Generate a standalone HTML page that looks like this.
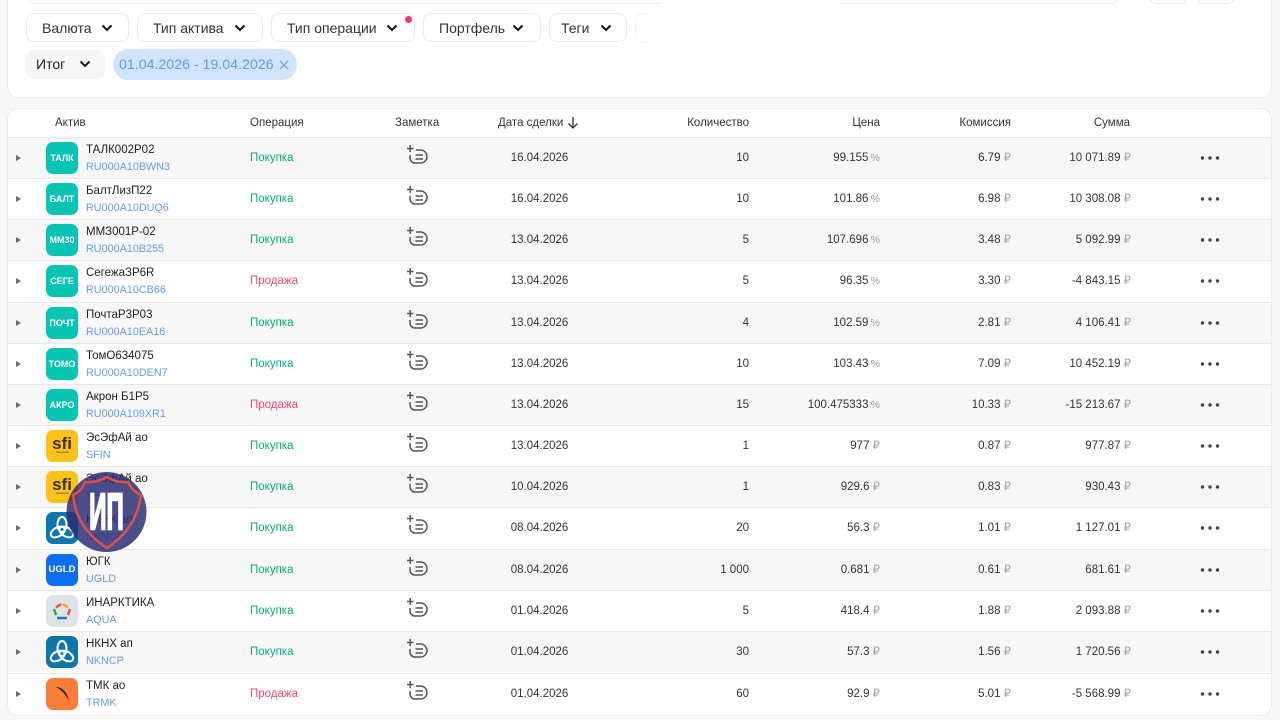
<!DOCTYPE html>
<html lang="ru"><head><meta charset="utf-8"><style>
*{box-sizing:border-box}
html,body{margin:0;padding:0}
body{width:1280px;height:720px;overflow:hidden;background:#f8f8f8;position:relative;font-family:"Liberation Sans","Noto Sans CJK SC",sans-serif;color:#333;font-size:12px}
.card{position:absolute;left:7px;width:1265px;background:#fff;border:1px solid #ececec;border-radius:11px}
.chip{position:absolute;top:13px;height:29px;border:1px solid #ececec;border-radius:8px;background:#fff;font-size:14px;line-height:28px;color:#333}
.chip span,.it span{position:absolute;left:15px;white-space:nowrap}
.chip svg,.it svg{position:absolute;top:10px;width:12px;height:9px}
.it{position:absolute;left:26px;top:50px;width:79px;height:29px;background:#f6f6f6;border-radius:8px;font-size:14px;line-height:29px;color:#222}
.it span{left:10px}
.date{position:absolute;left:113px;top:49px;width:184px;height:31px;border-radius:16px;background:#d2e3fc;color:#5c9be8;font-size:14px;line-height:31px;padding-left:6px;white-space:nowrap;letter-spacing:.09px}
.th{position:absolute;top:116px;font-size:11.5px;line-height:14px;color:#333;white-space:nowrap}
.r{position:absolute;left:8px;width:1263px;height:41px;border-top:1px solid #e8e8e8}
.g{background:#f7f7f7}
.r div{position:absolute;white-space:nowrap}
.a{left:8px;top:17px;width:0;height:0;border-left:5px solid #6b6b70;border-top:3.5px solid transparent;border-bottom:3.5px solid transparent}
.l{left:38px;top:4px;width:32px;height:32px;border-radius:7px;background:#08c4b2;color:#fff;font-weight:bold;font-size:9px;line-height:32px;text-align:center;overflow:hidden}
.l svg{position:absolute;left:0;top:0;width:32px;height:32px}
.n{left:78px;top:5px;font-size:11.5px;line-height:15px;color:#222}
.c{left:78px;top:22px;font-size:10.8px;line-height:15px;color:#6a9be4}
.o{left:242px;top:13px;font-size:11.5px;line-height:15px}
.b{color:#0bab7c}.s{color:#ee4b73}
.i{left:398px;top:6px;width:22px;height:20px}
.i svg{width:22px;height:20px;display:block}
.d{left:480px;width:103px;top:13px;text-align:center;font-size:11.5px;line-height:15px}
.q,.p,.k,.t{top:13px;text-align:right;font-size:11.5px;line-height:15px;color:#333}
.q{right:522px}.p{right:391px}.k{right:260px}.t{right:140px}
u{text-decoration:none;color:#a5a5a5}
u.x{font-size:10.5px;margin-left:-1px;color:#999}
.m{left:1192px;top:18px;width:20px;height:4px}
.m svg{display:block;width:20px;height:4px}
</style></head><body>
<svg width="0" height="0" style="position:absolute">
<symbol id="nt" viewBox="0 0 22 20"><path d="M1 4.500h6.500M4.200 1v7" stroke="#555" stroke-width="1.500" fill="none"/><path d="M10 6h4.500a6.500 6.500 0 0 1 0 13H9a5 5 0 0 1-5-5v-3M9.500 11h7.500M9.500 15h7.500" stroke="#555" stroke-width="1.500" fill="none"/></symbol>
<symbol id="dt" viewBox="0 0 20 4"><circle cx="2.500" cy="2" r="1.700" fill="#444"/><circle cx="10" cy="2" r="1.700" fill="#444"/><circle cx="17.500" cy="2" r="1.700" fill="#444"/></symbol>
<symbol id="ch" viewBox="0 0 12 9"><path d="M1.500 1.500l4.500 4.500 4.500-4.500" fill="none" stroke="#111" stroke-width="2"/></symbol>
<symbol id="nk" viewBox="0 0 32 32"><g fill="none" stroke="#fff" stroke-width="2"><ellipse cx="16" cy="12.500" rx="4.500" ry="7.500"/><ellipse cx="16" cy="12.500" rx="4.500" ry="7.500" transform="rotate(120 16 17.500)"/><ellipse cx="16" cy="12.500" rx="4.500" ry="7.500" transform="rotate(240 16 17.500)"/></g></symbol>
<symbol id="sf" viewBox="0 0 32 32"><rect x="10" y="21.500" width="13" height="1.500" fill="#a58a3c"/></symbol>
</svg>
<div class="card" style="top:-10px;height:108px"></div>
<div style="position:absolute;left:28px;top:-8px;width:1090px;height:12px;border:1px solid #ececec;border-radius:8px"></div>
<div style="position:absolute;left:1150px;top:-8px;width:37px;height:12px;border:1px solid #ececec;border-radius:8px"></div>
<div style="position:absolute;left:1197px;top:-8px;width:37px;height:12px;border:1px solid #ececec;border-radius:8px"></div>
<div style="position:absolute;left:660px;top:0;width:180px;height:4px;background:#fff"></div>

<div class="chip" style="left:26px;width:103px"><span>Валюта</span><svg style="left:74px"><use href="#ch"/></svg></div>
<div class="chip" style="left:137px;width:126px"><span>Тип актива</span><svg style="left:96px"><use href="#ch"/></svg></div>
<div class="chip" style="left:271px;width:144px"><span>Тип операции</span><svg style="left:114px"><use href="#ch"/></svg></div>
<div style="position:absolute;left:405px;top:16px;width:7px;height:7px;border-radius:50%;background:#f5386a"></div>
<div class="chip" style="left:423px;width:118px"><span>Портфель</span><svg style="left:88px"><use href="#ch"/></svg></div>
<div class="chip" style="left:549px;width:78px"><span style="left:11px">Теги</span><svg style="left:50px"><use href="#ch"/></svg></div>
<div style="position:absolute;left:635px;top:13px;width:12px;height:29px;border:1px solid #f3f3f3;border-right:0;border-radius:8px 0 0 8px"></div>
<div class="it"><span>Итог</span><svg style="left:53px;top:10px"><use href="#ch"/></svg></div>
<div class="date">01.04.2026 - 19.04.2026<svg style="position:absolute;left:166px;top:11px" width="10" height="10" viewBox="0 0 10 10"><path d="M1 1l8 8M9 1l-8 8" stroke="#5c9be8" stroke-width="1.200"/></svg></div>

<div class="card" style="top:108px;height:608px"></div>
<div class="th" style="left:55px">Актив</div>
<div class="th" style="left:250px">Операция</div>
<div class="th" style="left:395px">Заметка</div>
<div class="th" style="left:498px">Дата сделки</div>
<svg style="position:absolute;left:566px;top:116px" width="14" height="14" viewBox="0 0 14 14"><path d="M7 1v11M2.500 7.500L7 12l4.500-4.500" fill="none" stroke="#333" stroke-width="1.300"/></svg>
<div class="th" style="right:531px">Количество</div>
<div class="th" style="right:400px">Цена</div>
<div class="th" style="right:269px">Комиссия</div>
<div class="th" style="right:150px">Сумма</div>

<div class="r g" style="top:137px"><div class="a"></div><div class="l">ТАЛК</div><div class="n">ТАЛК002Р02</div><div class="c">RU000A10BWN3</div><div class="o b">Покупка</div><div class="i"><svg><use href="#nt"/></svg></div><div class="d">16.04.2026</div><div class="q">10</div><div class="p">99.155 <u class="x">%</u></div><div class="k">6.79 <u>₽</u></div><div class="t">10 071.89 <u>₽</u></div><div class="m"><svg><use href="#dt"/></svg></div></div>

<div class="r" style="top:178px"><div class="a"></div><div class="l">БАЛТ</div><div class="n">БалтЛизП22</div><div class="c">RU000A10DUQ6</div><div class="o b">Покупка</div><div class="i"><svg><use href="#nt"/></svg></div><div class="d">16.04.2026</div><div class="q">10</div><div class="p">101.86 <u class="x">%</u></div><div class="k">6.98 <u>₽</u></div><div class="t">10 308.08 <u>₽</u></div><div class="m"><svg><use href="#dt"/></svg></div></div>

<div class="r g" style="top:219px"><div class="a"></div><div class="l">ММ30</div><div class="n">ММЗ001Р-02</div><div class="c">RU000A10B255</div><div class="o b">Покупка</div><div class="i"><svg><use href="#nt"/></svg></div><div class="d">13.04.2026</div><div class="q">5</div><div class="p">107.696 <u class="x">%</u></div><div class="k">3.48 <u>₽</u></div><div class="t">5 092.99 <u>₽</u></div><div class="m"><svg><use href="#dt"/></svg></div></div>

<div class="r" style="top:260px"><div class="a"></div><div class="l">СЕГЕ</div><div class="n">СегежаЗР6R</div><div class="c">RU000A10CB66</div><div class="o s">Продажа</div><div class="i"><svg><use href="#nt"/></svg></div><div class="d">13.04.2026</div><div class="q">5</div><div class="p">96.35 <u class="x">%</u></div><div class="k">3.30 <u>₽</u></div><div class="t">-4 843.15 <u>₽</u></div><div class="m"><svg><use href="#dt"/></svg></div></div>

<div class="r g" style="top:302px"><div class="a"></div><div class="l">ПОЧТ</div><div class="n">ПочтаР3Р03</div><div class="c">RU000A10EA16</div><div class="o b">Покупка</div><div class="i"><svg><use href="#nt"/></svg></div><div class="d">13.04.2026</div><div class="q">4</div><div class="p">102.59 <u class="x">%</u></div><div class="k">2.81 <u>₽</u></div><div class="t">4 106.41 <u>₽</u></div><div class="m"><svg><use href="#dt"/></svg></div></div>

<div class="r" style="top:343px"><div class="a"></div><div class="l">ТОМО</div><div class="n">ТомО634075</div><div class="c">RU000A10DEN7</div><div class="o b">Покупка</div><div class="i"><svg><use href="#nt"/></svg></div><div class="d">13.04.2026</div><div class="q">10</div><div class="p">103.43 <u class="x">%</u></div><div class="k">7.09 <u>₽</u></div><div class="t">10 452.19 <u>₽</u></div><div class="m"><svg><use href="#dt"/></svg></div></div>

<div class="r g" style="top:384px"><div class="a"></div><div class="l">АКРО</div><div class="n">Акрон Б1Р5</div><div class="c">RU000A109XR1</div><div class="o s">Продажа</div><div class="i"><svg><use href="#nt"/></svg></div><div class="d">13.04.2026</div><div class="q">15</div><div class="p">100.475333 <u class="x">%</u></div><div class="k">10.33 <u>₽</u></div><div class="t">-15 213.67 <u>₽</u></div><div class="m"><svg><use href="#dt"/></svg></div></div>

<div class="r" style="top:425px"><div class="a"></div><div class="l" style="background:#fdc11c;color:#3a3320;font-size:17px;line-height:28px">sfi<svg><use href="#sf"/></svg></div><div class="n">ЭсЭфАй ао</div><div class="c">SFIN</div><div class="o b">Покупка</div><div class="i"><svg><use href="#nt"/></svg></div><div class="d">13.04.2026</div><div class="q">1</div><div class="p">977 <u>₽</u></div><div class="k">0.87 <u>₽</u></div><div class="t">977.87 <u>₽</u></div><div class="m"><svg><use href="#dt"/></svg></div></div>

<div class="r g" style="top:466px"><div class="a"></div><div class="l" style="background:#fdc11c;color:#3a3320;font-size:17px;line-height:28px">sfi<svg><use href="#sf"/></svg></div><div class="n">ЭсЭфАй ао</div><div class="c">SFIN</div><div class="o b">Покупка</div><div class="i"><svg><use href="#nt"/></svg></div><div class="d">10.04.2026</div><div class="q">1</div><div class="p">929.6 <u>₽</u></div><div class="k">0.83 <u>₽</u></div><div class="t">930.43 <u>₽</u></div><div class="m"><svg><use href="#dt"/></svg></div></div>

<div class="r" style="top:507px"><div class="a"></div><div class="l" style="background:#0d77ab"><svg><use href="#nk"/></svg></div><div class="n">НКНХ ап</div><div class="c">NKNCP</div><div class="o b">Покупка</div><div class="i"><svg><use href="#nt"/></svg></div><div class="d">08.04.2026</div><div class="q">20</div><div class="p">56.3 <u>₽</u></div><div class="k">1.01 <u>₽</u></div><div class="t">1 127.01 <u>₽</u></div><div class="m"><svg><use href="#dt"/></svg></div></div>

<div class="r g" style="top:549px"><div class="a"></div><div class="l" style="background:#0f6ef0;font-size:9.500px">UGLD</div><div class="n">ЮГК</div><div class="c">UGLD</div><div class="o b">Покупка</div><div class="i"><svg><use href="#nt"/></svg></div><div class="d">08.04.2026</div><div class="q">1 000</div><div class="p">0.681 <u>₽</u></div><div class="k">0.61 <u>₽</u></div><div class="t">681.61 <u>₽</u></div><div class="m"><svg><use href="#dt"/></svg></div></div>

<div class="r" style="top:590px"><div class="a"></div><div class="l" style="background:#dfe3e8"><svg viewBox="0 0 32 32"><path d="M15 9l-5 3.500" stroke="#e8503a" stroke-width="2.500" fill="none"/><path d="M17 9l5 3.500" stroke="#f2a33a" stroke-width="2.500" fill="none"/><path d="M24 14l-2 6" stroke="#e8503a" stroke-width="2.500" fill="none"/><path d="M11 23h10" stroke="#1a7fb8" stroke-width="2.500" fill="none"/><path d="M8 14l2 6" stroke="#3aa648" stroke-width="2.500" fill="none"/></svg></div><div class="n">ИНАРКТИКА</div><div class="c">AQUA</div><div class="o b">Покупка</div><div class="i"><svg><use href="#nt"/></svg></div><div class="d">01.04.2026</div><div class="q">5</div><div class="p">418.4 <u>₽</u></div><div class="k">1.88 <u>₽</u></div><div class="t">2 093.88 <u>₽</u></div><div class="m"><svg><use href="#dt"/></svg></div></div>

<div class="r g" style="top:631px"><div class="a"></div><div class="l" style="background:#0d77ab"><svg><use href="#nk"/></svg></div><div class="n">НКНХ ап</div><div class="c">NKNCP</div><div class="o b">Покупка</div><div class="i"><svg><use href="#nt"/></svg></div><div class="d">01.04.2026</div><div class="q">30</div><div class="p">57.3 <u>₽</u></div><div class="k">1.56 <u>₽</u></div><div class="t">1 720.56 <u>₽</u></div><div class="m"><svg><use href="#dt"/></svg></div></div>

<div class="r" style="top:673px"><div class="a"></div><div class="l" style="background:#fb7d3c"><svg viewBox="0 0 32 32"><path d="M10 9c6 0 11 5 13 14-3-6-7-11-13-14z" fill="#1a1a1a"/></svg></div><div class="n">ТМК ао</div><div class="c">TRMK</div><div class="o s">Продажа</div><div class="i"><svg><use href="#nt"/></svg></div><div class="d">01.04.2026</div><div class="q">60</div><div class="p">92.9 <u>₽</u></div><div class="k">5.01 <u>₽</u></div><div class="t">-5 568.99 <u>₽</u></div><div class="m"><svg><use href="#dt"/></svg></div></div>

<svg style="position:absolute;left:66px;top:472px" width="81" height="81" viewBox="0 0 81 81"><circle cx="40.500" cy="40" r="40" fill="#2a2c72" fill-opacity=".84"/><path d="M41 5Q31 11 19 10Q16 19 7 23Q10 56 41 76Q71 56 75 23Q66 19 62 10Q50 11 41 5Z" fill="none" stroke="#e0504a" stroke-width="2.500"/><text x="0" y="57" text-anchor="middle" font-family="Liberation Sans" font-weight="bold" font-size="51" fill="#fff" stroke="#fff" stroke-width="2.500" transform="translate(40.500 0) scale(.47 1)">ИП</text></svg>
</body></html>
